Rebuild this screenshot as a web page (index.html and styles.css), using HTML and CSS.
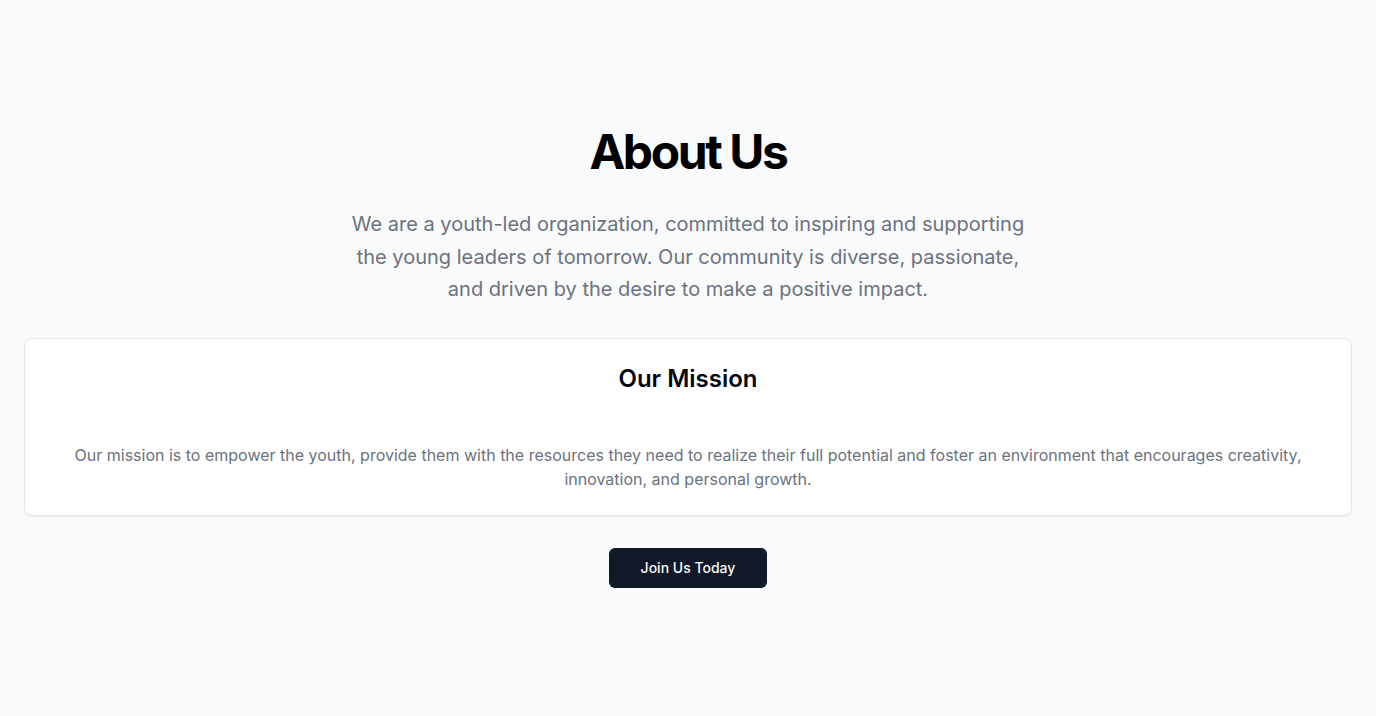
FILE: index.html
```html
<!DOCTYPE html>
<html lang="en">
<head>
<meta charset="utf-8">
<title>About Us</title>
<link rel="stylesheet" href="styles.css">
</head>
<body>
<main class="section">
  <div class="container">
    <div class="intro">
      <h1 class="title">About Us</h1>
      <p class="lead">We are a youth-led organization, committed to inspiring and supporting the young leaders of tomorrow. Our community is diverse, passionate, and driven by the desire to make a positive impact.</p>
    </div>
    <div class="card">
      <div class="card-header">
        <h2 class="card-title">Our Mission</h2>
      </div>
      <div class="card-content">
        <p class="card-text">Our mission is to empower the youth, provide them with the resources they need to realize their full potential and foster an environment that encourages creativity, innovation, and personal growth.</p>
      </div>
    </div>
    <div class="actions">
      <a class="btn" href="#">Join Us Today</a>
    </div>
  </div>
</main>
</body>
</html>
```
FILE: styles.css
```css
* { box-sizing: border-box; }
html, body { margin: 0; padding: 0; }
body {
  background: #f9fafb;
  font-family: Inter, "Noto Sans", sans-serif;
  color: #030712;
}
.section {
  padding-top: 128px;
  padding-bottom: 96px;
}
.container {
  padding: 0 24px;
  display: flex;
  flex-direction: column;
  align-items: center;
}
.intro {
  display: flex;
  flex-direction: column;
  align-items: center;
  text-align: center;
  gap: 32px;
}
.title {
  margin: 0;
  font-size: 48px;
  line-height: 1;
  font-weight: 700;
  letter-spacing: -0.05em;
  color: #000;
}
.lead {
  margin: 0;
  max-width: 700px;
  font-size: 20px;
  line-height: 32.5px;
  color: #6b7280;
}
.card {
  margin-top: 32px;
  width: 100%;
  background: #fff;
  border: 1px solid #e5e7eb;
  border-radius: 8px;
  box-shadow: 0 1px 2px rgba(0,0,0,0.05);
}
.card-header {
  padding: 24px 24px 0;
  text-align: center;
}
.card-title {
  margin: 0;
  font-size: 24px;
  line-height: 32px;
  font-weight: 600;
  color: #030712;
}
.card-content {
  padding: 48px 22px 24px;
}
.card-text {
  margin: 0;
  text-align: center;
  font-size: 16px;
  line-height: 24px;
  color: #6b7280;
}
.actions {
  margin-top: 32px;
}
.btn {
  display: inline-flex;
  align-items: center;
  justify-content: center;
  height: 40px;
  padding: 0 32px;
  border-radius: 6px;
  background: #111827;
  color: #f9fafb;
  font-size: 14px;
  font-weight: 500;
  text-decoration: none;
}
```
